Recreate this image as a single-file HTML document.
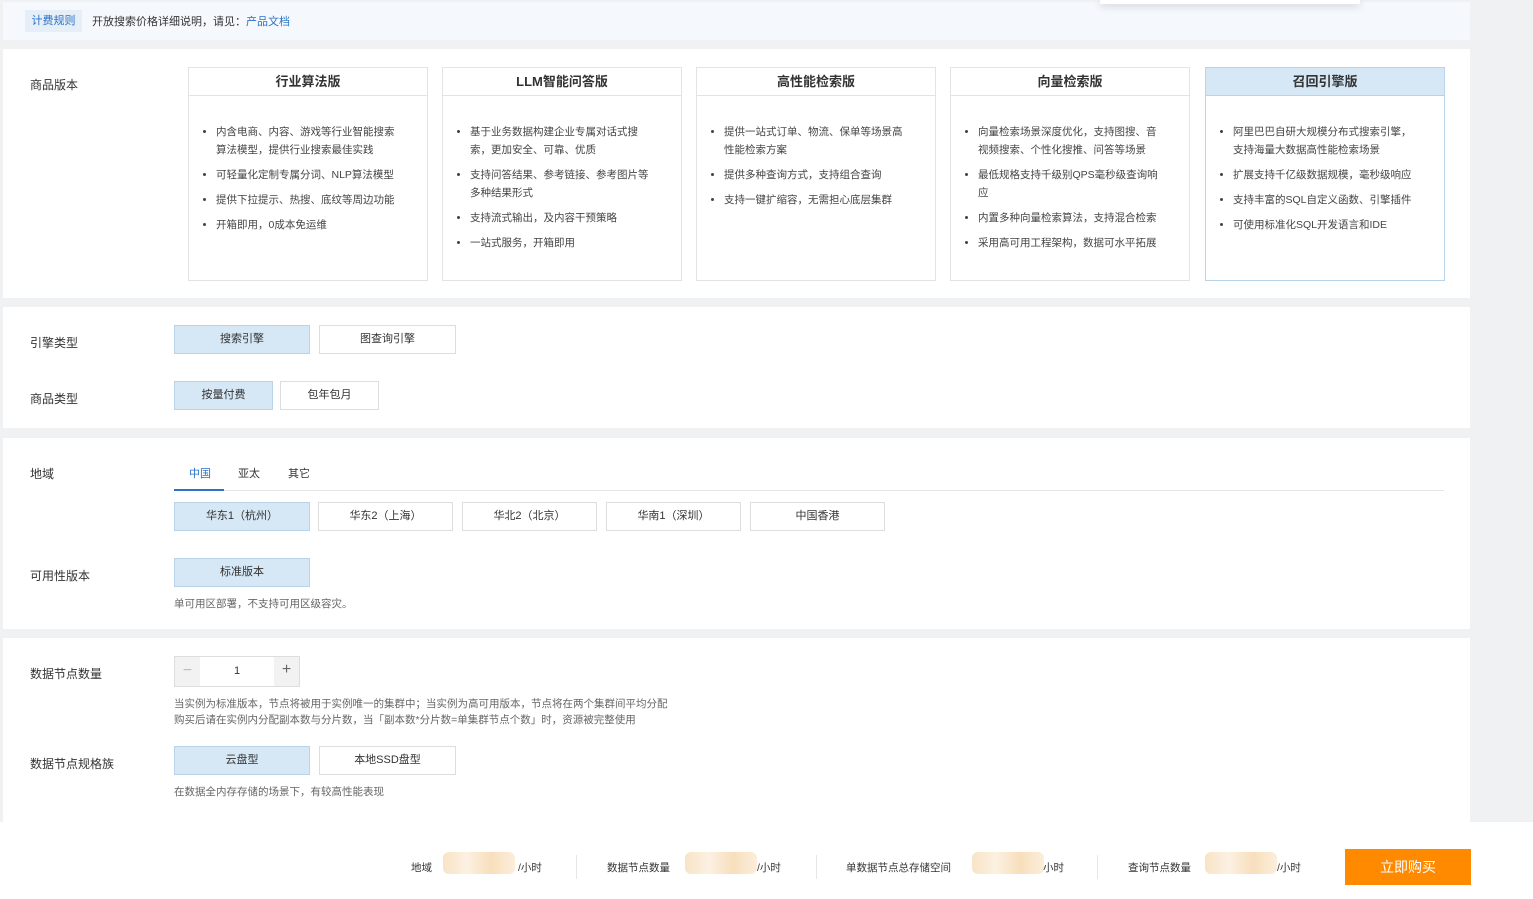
<!DOCTYPE html>
<html><head><meta charset="utf-8"><style>
*{margin:0;padding:0;box-sizing:border-box}
body{width:1533px;height:899px;background:#f0f1f3;font-family:"Liberation Sans","Noto Sans CJK SC",sans-serif;color:#333;position:relative;overflow:hidden;font-size:11px}
.a{position:absolute}
.panel{position:absolute;left:3px;width:1467px;background:#fff}
.lbl{position:absolute;left:30px;font-size:12px;color:#333}
.card{position:absolute;top:67px;width:240px;height:214px;border:1px solid #e3e3e3;background:#fff}
.card .h{height:28px;border-bottom:1px solid #e3e3e3;text-align:center;line-height:27px;font-size:13px;font-weight:bold;color:#333}
.card ul{padding:27px 24px 0 27px;font-size:10.5px;color:#444;line-height:18px}
.card li{margin-bottom:7px}
.btn{position:absolute;height:29px;border:1px solid #ddd;background:#fff;text-align:center;line-height:27px;font-size:11px;color:#333}
.sel{background:#d6e7f5;border-color:#b8d3ea}
.note{position:absolute;left:174px;font-size:10.5px;color:#666;line-height:16px}
.blur{position:absolute;height:22px;width:72px;background:linear-gradient(90deg,#f7dfbc,#fbeedd,#f6d9b0,#fbebd5);border-radius:6px;opacity:.85}
.bt{position:absolute;font-size:10.5px;color:#333;top:860px}
.sep{position:absolute;top:855px;width:1px;height:24px;background:#e6e6e6}
</style></head><body>
<div class="a" style="left:3px;top:2px;width:1467px;height:38px;background:#f5f9fe"></div>
<div class="a" style="left:1100px;top:0;width:260px;height:4px;box-shadow:0 2px 8px rgba(0,0,0,.2);background:#fff"></div>
<div class="a" style="left:25px;top:10px;width:57px;height:22px;background:#e6eef8;color:#2a73c5;font-size:11px;text-align:center;line-height:22px">计费规则</div>
<div class="a" style="left:92px;top:13px;font-size:11px;color:#333">开放搜索价格详细说明，请见：<span style="color:#2a73c5">产品文档</span></div>

<div class="panel" style="top:49px;height:249px"></div>
<div class="lbl" style="top:76px">商品版本</div>
<div class="card" style="left:188px"><div class="h">行业算法版</div><ul><li>内含电商、内容、游戏等行业智能搜索算法模型，提供行业搜索最佳实践</li><li>可轻量化定制专属分词、NLP算法模型</li><li>提供下拉提示、热搜、底纹等周边功能</li><li>开箱即用，0成本免运维</li></ul></div>
<div class="card" style="left:442px"><div class="h">LLM智能问答版</div><ul><li>基于业务数据构建企业专属对话式搜索，更加安全、可靠、优质</li><li>支持问答结果、参考链接、参考图片等多种结果形式</li><li>支持流式输出，及内容干预策略</li><li>一站式服务，开箱即用</li></ul></div>
<div class="card" style="left:696px"><div class="h">高性能检索版</div><ul><li>提供一站式订单、物流、保单等场景高性能检索方案</li><li>提供多种查询方式，支持组合查询</li><li>支持一键扩缩容，无需担心底层集群</li></ul></div>
<div class="card" style="left:950px"><div class="h">向量检索版</div><ul><li>向量检索场景深度优化，支持图搜、音视频搜索、个性化搜推、问答等场景</li><li>最低规格支持千级别QPS毫秒级查询响应</li><li>内置多种向量检索算法，支持混合检索</li><li>采用高可用工程架构，数据可水平拓展</li></ul></div>
<div class="card" style="left:1205px;border-color:#b8d3ea"><div class="h" style="background:#d6e7f5;border-color:#b8d3ea">召回引擎版</div><ul><li>阿里巴巴自研大规模分布式搜索引擎，支持海量大数据高性能检索场景</li><li>扩展支持千亿级数据规模，毫秒级响应</li><li>支持丰富的SQL自定义函数、引擎插件</li><li>可使用标准化SQL开发语言和IDE</li></ul></div>

<div class="panel" style="top:307px;height:121px"></div>
<div class="lbl" style="top:334px">引擎类型</div>
<div class="btn sel" style="left:174px;top:325px;width:136px">搜索引擎</div>
<div class="btn" style="left:319px;top:325px;width:137px">图查询引擎</div>
<div class="lbl" style="top:390px">商品类型</div>
<div class="btn sel" style="left:174px;top:381px;width:99px">按量付费</div>
<div class="btn" style="left:280px;top:381px;width:99px">包年包月</div>

<div class="panel" style="top:438px;height:191px"></div>
<div class="lbl" style="top:465px">地域</div>
<div class="a" style="left:174px;top:490px;width:1270px;height:1px;background:#e6e6e6"></div>
<div class="a" style="left:174px;top:489px;width:50px;height:2px;background:#2a73c5"></div>
<div class="a" style="left:189px;top:465px;color:#2a73c5">中国</div>
<div class="a" style="left:238px;top:465px;color:#333">亚太</div>
<div class="a" style="left:288px;top:465px;color:#333">其它</div>
<div class="btn sel" style="left:174px;top:502px;width:136px">华东1（杭州）</div>
<div class="btn" style="left:318px;top:502px;width:135px">华东2（上海）</div>
<div class="btn" style="left:462px;top:502px;width:135px">华北2（北京）</div>
<div class="btn" style="left:606px;top:502px;width:135px">华南1（深圳）</div>
<div class="btn" style="left:750px;top:502px;width:135px">中国香港</div>
<div class="lbl" style="top:567px">可用性版本</div>
<div class="btn sel" style="left:174px;top:558px;width:136px">标准版本</div>
<div class="note" style="top:596px">单可用区部署，不支持可用区级容灾。</div>

<div class="panel" style="top:638px;height:184px"></div>
<div class="lbl" style="top:665px">数据节点数量</div>
<div class="a" style="left:174px;top:656px;width:126px;height:31px;border:1px solid #ddd;background:#fff">
<div class="a" style="left:0;top:0;width:25px;height:29px;background:#f2f2f2;color:#bbb;text-align:center;line-height:27px;font-size:16px">−</div>
<div class="a" style="left:25px;top:0;width:74px;height:29px;text-align:center;line-height:29px;font-size:11px">1</div>
<div class="a" style="left:99px;top:0;width:25px;height:29px;background:#f2f2f2;color:#666;text-align:center;line-height:25px;font-size:16px">+</div></div>
<div class="note" style="top:696px">当实例为标准版本，节点将被用于实例唯一的集群中；当实例为高可用版本，节点将在两个集群间平均分配<br>购买后请在实例内分配副本数与分片数，当「副本数*分片数=单集群节点个数」时，资源被完整使用</div>
<div class="lbl" style="top:755px">数据节点规格族</div>
<div class="btn sel" style="left:174px;top:746px;width:136px">云盘型</div>
<div class="btn" style="left:319px;top:746px;width:137px">本地SSD盘型</div>
<div class="note" style="top:784px">在数据全内存存储的场景下，有较高性能表现</div>

<div class="a" style="left:0;top:822px;width:1533px;height:77px;background:#fff"></div>
<div class="bt" style="left:411px">地域</div><div class="blur" style="left:443px;top:852px"></div><div class="bt" style="left:518px">/小时</div>
<div class="sep" style="left:576px"></div>
<div class="bt" style="left:607px">数据节点数量</div><div class="blur" style="left:685px;top:852px"></div><div class="bt" style="left:757px">/小时</div>
<div class="sep" style="left:816px"></div>
<div class="bt" style="left:846px">单数据节点总存储空间</div><div class="blur" style="left:972px;top:852px"></div><div class="bt" style="left:1043px">小时</div>
<div class="sep" style="left:1097px"></div>
<div class="bt" style="left:1128px">查询节点数量</div><div class="blur" style="left:1205px;top:852px"></div><div class="bt" style="left:1277px">/小时</div>
<div class="a" style="left:1345px;top:849px;width:126px;height:36px;background:#ff8a00;color:#fff;font-size:14px;text-align:center;line-height:36px">立即购买</div>
</body></html>
